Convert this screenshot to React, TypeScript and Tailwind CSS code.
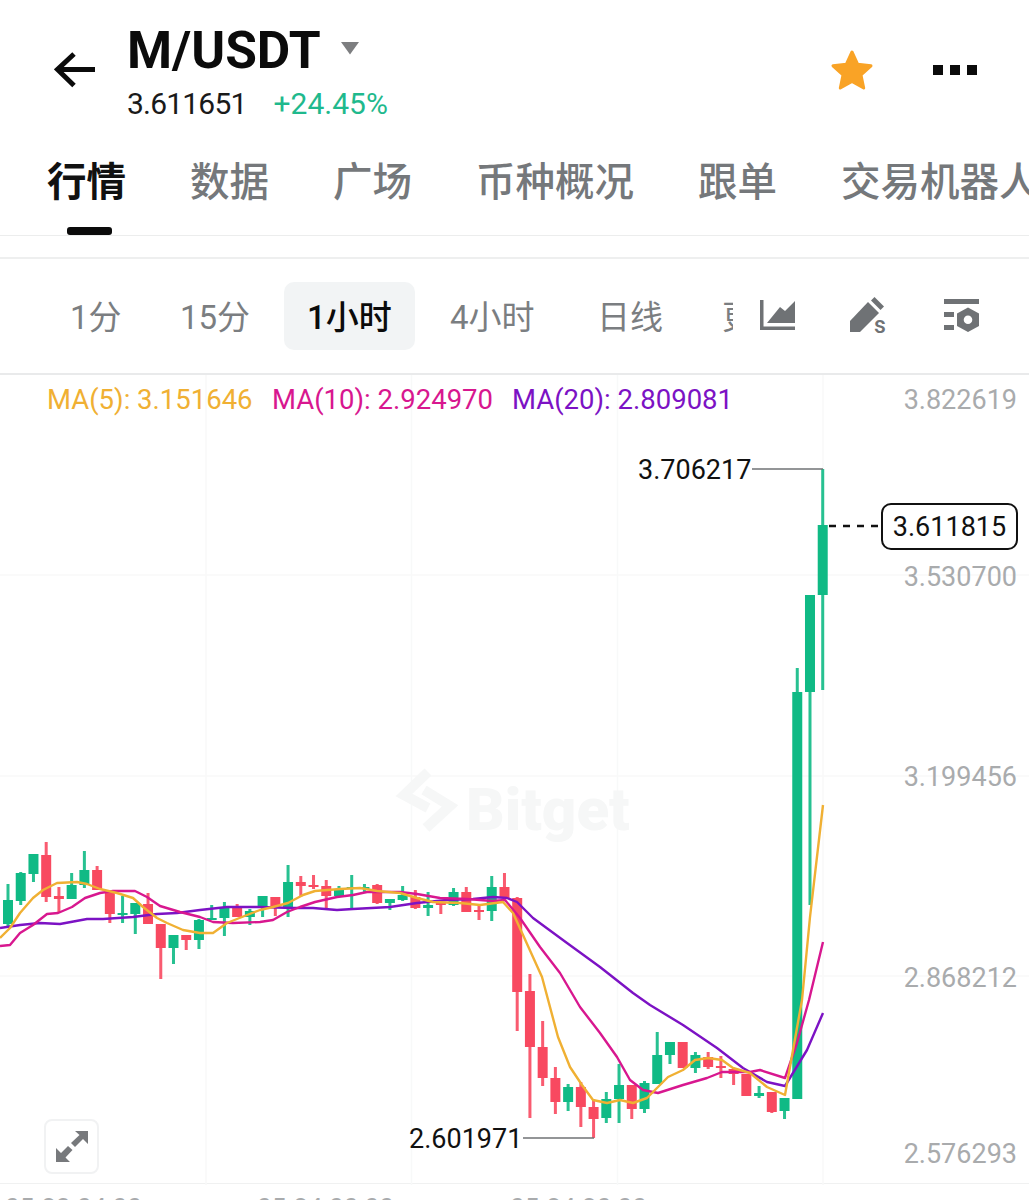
const num = '"Roboto", "Noto Sans CJK SC", sans-serif';

// g = green, r = red; [color, bodyTop, bodyBottom, wickTop, wickBottom], 12.73px apart
const candles: [string, number, number, number, number][] = [
  ['g', 900, 924, 884, 926], ['g', 873, 901, 872, 905], ['g', 854, 874, 854, 882], ['r', 855, 897, 842, 902],
  ['r', 896, 899, 887, 912], ['g', 885, 899, 873, 899], ['g', 870, 885, 851, 888], ['r', 870, 890, 866, 890],
  ['r', 890, 914, 890, 923], ['g', 913, 915, 896, 923], ['g', 903, 914, 903, 934], ['r', 904, 924, 893, 924],
  ['r', 924, 948, 924, 979], ['g', 935, 948, 935, 964], ['r', 935, 940, 935, 950], ['g', 920, 940, 919, 949],
  ['g', 918, 920, 905, 920], ['g', 908, 918, 902, 936], ['r', 907, 917, 904, 917], ['g', 911, 917, 909, 925],
  ['g', 896, 907, 896, 917], ['r', 897, 908, 897, 916], ['g', 882, 907, 865, 917], ['r', 882, 886, 876, 897],
  ['r', 885, 887, 875, 889], ['r', 886, 896, 880, 909], ['g', 890, 896, 886, 896], ['g', 887, 889, 875, 909],
  ['g', 887, 889, 884, 892], ['r', 885, 903, 884, 904], ['g', 899, 903, 899, 910], ['g', 895, 900, 886, 901],
  ['r', 897, 908, 890, 909], ['g', 905, 908, 892, 916], ['r', 903, 905, 903, 914], ['g', 892, 905, 888, 906],
  ['r', 892, 912, 887, 912], ['r', 910, 912, 904, 920], ['g', 887, 911, 876, 921], ['r', 887, 898, 873, 898],
  ['r', 898, 992, 897, 1031], ['r', 991, 1047, 974, 1118], ['r', 1047, 1078, 1021, 1086], ['r', 1078, 1102, 1067, 1114],
  ['g', 1087, 1102, 1084, 1111], ['r', 1087, 1107, 1082, 1127], ['r', 1107, 1119, 1100, 1138], ['g', 1099, 1118, 1092, 1123],
  ['g', 1085, 1099, 1064, 1123], ['r', 1085, 1109, 1085, 1119], ['g', 1083, 1109, 1081, 1113], ['g', 1055, 1084, 1032, 1084],
  ['g', 1042, 1055, 1042, 1064], ['r', 1042, 1068, 1042, 1068], ['g', 1055, 1068, 1052, 1073], ['r', 1057, 1067, 1052, 1069],
  ['r', 1066, 1068, 1056, 1078], ['r', 1069, 1074, 1068, 1085], ['r', 1074, 1096, 1074, 1096], ['g', 1093, 1096, 1086, 1098],
  ['r', 1092, 1112, 1092, 1113], ['g', 1098, 1111, 1098, 1119], ['g', 692, 1099, 668, 1099], ['g', 595, 692, 595, 905],
  ['g', 525, 595, 469, 690],
];

const ma5 =
  '0,938 10,928 20,913 33,898 43,890 57,883 77,882 87,884 100,889 117,893 133,898 143,907 157,918 167,923 183,930 200,933 213,933 227,923 247,915 260,910 273,907 288,903 303,895 315,891 340,889 360,888 377,891 400,893 417,898 433,902 460,903 480,905 503,902 513,913 523,935 542,977 558,1037 570,1067 582,1085 593,1100 607,1103 620,1100 633,1103 647,1098 657,1088 668,1077 683,1070 695,1060 708,1058 722,1060 733,1068 750,1073 767,1087 785,1095 793,1050 802,1000 810,917 823,805';
const ma10 =
  '0,946 10,945 20,933 33,925 47,914 58,913 72,907 85,898 100,893 113,891 135,891 147,897 160,906 180,912 200,917 213,922 233,923 260,922 273,920 287,912 300,907 315,902 337,897 353,895 367,892 400,892 417,894 440,898 467,899 493,901 505,900 520,918 540,947 560,973 580,1007 600,1033 617,1057 630,1080 643,1090 658,1093 683,1085 707,1078 722,1072 750,1072 760,1070 785,1078 797,1043 809,1000 823,942';
const ma20 =
  '0,928 20,925 40,923 60,924 87,919 103,919 133,917 157,914 177,913 200,910 227,907 260,907 293,908 313,908 337,910 353,909 390,907 417,903 447,900 473,899 493,897 507,898 517,902 533,918 567,943 600,967 633,993 650,1005 683,1025 717,1048 743,1068 767,1082 785,1086 807,1050 823,1013';

const tabs = ['数据', '广场', '币种概况', '跟单', '交易机器人'];

function ChartSvg() {
  return (
    <svg className="absolute inset-0" width={1029} height={810} viewBox="0 375 1029 810">
      {[206, 411.5, 617.5, 823].map((x) => (
        <line key={x} x1={x} x2={x} y1={375} y2={1185} stroke="#f8f9f9" strokeWidth={1.5} />
      ))}
      {[575, 776, 976].map((y) => (
        <line key={y} x1={0} x2={1029} y1={y} y2={y} stroke="#f8f9f9" strokeWidth={1.5} />
      ))}

      {/* Bitget watermark */}
      <path d="M428 772 L404 795 L428 808 M424 790 L450 806 L426 828" fill="none" stroke="#f6f7f7" strokeWidth={10} />
      <text x={466} y={830} fontFamily="Roboto, sans-serif" fontWeight={900} fontSize={60} fill="#f6f7f7">
        Bitget
      </text>

      <rect x={-9} y={923} width={9} height={10} fill="#10ba85" />
      {candles.map(([c, top, bottom, wt, wb], i) => {
        const x = 8 + i * 12.73;
        const color = c === 'g' ? '#10ba85' : '#f84960';
        return (
          <g key={i}>
            <rect x={x - 1.5} y={wt} width={3} height={wb - wt} fill={color} opacity={0.9} />
            <rect x={x - 5} y={top} width={10} height={bottom - top} fill={color} />
          </g>
        );
      })}

      <polyline points={ma20} fill="none" stroke="#7c12c4" strokeWidth={2.4} strokeLinejoin="round" />
      <polyline points={ma10} fill="none" stroke="#d8178f" strokeWidth={2.4} strokeLinejoin="round" />
      <polyline points={ma5} fill="none" stroke="#f0b033" strokeWidth={2.4} strokeLinejoin="round" />

      <line x1={752} x2={823} y1={469} y2={469} stroke="#6f7275" strokeWidth={1.5} />
      <line x1={523} x2={594} y1={1138} y2={1138} stroke="#6f7275" strokeWidth={1.5} />
      <line x1={829} x2={878} y1={526} y2={526} stroke="#111" strokeWidth={2.4} strokeDasharray="7 7" />
    </svg>
  );
}

export default function App() {
  return (
    <div className="w-[1029px] h-[1200px] overflow-hidden bg-white flex flex-col" style={{ fontFamily: num }}>
      {/* Header */}
      <div className="h-[140px] shrink-0 flex items-start pl-[54px] pr-[52px]">
        <svg className="mt-[52px] shrink-0" width="41" height="36" viewBox="0 0 41 36" fill="none" stroke="#0b0b0b" strokeWidth="5">
          <path d="M41 17.5H4M20 2L3.5 17.5L20 33.5" />
        </svg>
        <div className="ml-[32px] mt-[22px]">
          <div className="flex items-start">
            <span className="text-[51.5px] leading-[58px] font-bold text-[#0b0b0b]">M/USDT</span>
            <svg className="ml-[20px] mt-[20px]" width="18" height="13" viewBox="0 0 18 13">
              <path d="M0 0H18L9 12.5Z" fill="#7d7e80" />
            </svg>
          </div>
          <div className="flex items-center mt-[7px] text-[30px] leading-[34px]">
            <span className="text-[#1a1a1a] tracking-[-0.8px]">3.611651</span>
            <span className="ml-[27px] text-[#1fb98d]">+24.45%</span>
          </div>
        </div>
        <svg className="ml-auto mt-[49px]" width="44" height="42" viewBox="0 0 44 42">
          <path d="M22 3L27.6 15.2L41 16.8L31 26L33.7 39L22 32.4L10.3 39L13 26L3 16.8L16.4 15.2Z" fill="#f9a326" stroke="#f9a326" strokeWidth="3" strokeLinejoin="round" />
        </svg>
        <div className="ml-[59px] mt-[65px] flex gap-[7px]">
          <div className="w-[10px] h-[10px] bg-[#0b0b0b]" />
          <div className="w-[10px] h-[10px] bg-[#0b0b0b]" />
          <div className="w-[10px] h-[10px] bg-[#0b0b0b]" />
        </div>
      </div>

      {/* Tabs */}
      <div className="h-[96px] shrink-0 border-b border-[#eceded] flex items-start pl-[47px] gap-[64px] whitespace-nowrap overflow-hidden">
        <div className="flex flex-col items-center shrink-0">
          <span className="text-[39.5px] leading-[46px] mt-[20px] font-bold text-[#111]">行情</span>
          <div className="w-[45px] h-[8px] ml-[6px] rounded-[3px] bg-[#0b0b0b] mt-[21px]" />
        </div>
        {tabs.map((t) => (
          <span key={t} className="shrink-0 text-[39.5px] leading-[46px] mt-[20px] font-medium text-[#75787b]">
            {t}
          </span>
        ))}
      </div>

      <div className="h-[23px] shrink-0 border-b-2 border-[#eeefef]" />

      {/* Toolbar */}
      <div className="h-[116px] shrink-0 border-b-2 border-[#e9eaeb] flex items-center pl-[70px] text-[33px] text-[#7b7e81] whitespace-nowrap">
        <span className="w-[110px] pt-[4px] shrink-0">1分</span>
        <span className="w-[104px] pt-[4px] shrink-0">15分</span>
        <span className="w-[131px] h-[68px] pt-[4px] shrink-0 rounded-[10px] bg-[#f2f4f5] flex items-center justify-center font-medium text-[#0b0b0b]">
          1小时
        </span>
        <span className="ml-[35px] w-[147px] pt-[4px] shrink-0">4小时</span>
        <span className="w-[125px] pt-[4px] shrink-0">日线</span>
        <span className="w-[11px] pt-[4px] shrink-0 overflow-hidden">更</span>
        <svg className="ml-[27px] shrink-0" width="36" height="32" viewBox="0 0 36 32" fill="#6f7275">
          <path d="M0 0H3.5V26.5H35V30H0Z" />
          <path d="M7 23L20 7L25 11L35 1V23Z" />
        </svg>
        <svg className="ml-[54px] shrink-0" width="39" height="38" viewBox="0 0 39 38" fill="#6f7275">
          <path d="M0 24L18 5L29 16L10 35H0Z" />
          <path d="M21 3.5L24.5 0L34 9.5L30.5 13Z" />
          <text x="24" y="36" fontSize="23" fontWeight="500" fontFamily="Roboto, sans-serif">s</text>
        </svg>
        <svg className="ml-[55px] shrink-0" width="36" height="35" viewBox="0 0 36 35" fill="#6f7275">
          <path d="M0 0H35V5H0Z" />
          <path d="M0 13H10V18H0ZM0 26H10V31H0Z" />
          <path fillRule="evenodd" d="M24 8.5L35 14.5V27L24 33L13 27V14.5ZM24 16.5A4.3 4.3 0 1 0 24 25.1A4.3 4.3 0 1 0 24 16.5Z" />
        </svg>
      </div>

      {/* Chart */}
      <div className="relative h-[809px] shrink-0 border-b border-[#f0f1f1]">
        <ChartSvg />

        <div className="absolute left-[47px] top-[25px] -translate-y-1/2 flex text-[27.5px] leading-none whitespace-nowrap">
          <span className="w-[225px] text-[#f0b033]">MA(5): 3.151646</span>
          <span className="w-[240px] text-[#d8178f]">MA(10): 2.924970</span>
          <span className="text-[#7c12c4]">MA(20): 2.809081</span>
        </div>

        <span className="absolute right-[12px] top-[25px] -translate-y-1/2 text-[27px] leading-none text-[#a9abad]">3.822619</span>
        <span className="absolute right-[12px] top-[202px] -translate-y-1/2 text-[27px] leading-none text-[#a9abad]">3.530700</span>
        <span className="absolute right-[12px] top-[402px] -translate-y-1/2 text-[27px] leading-none text-[#a9abad]">3.199456</span>
        <span className="absolute right-[12px] top-[603px] -translate-y-1/2 text-[27px] leading-none text-[#a9abad]">2.868212</span>
        <span className="absolute right-[12px] top-[779px] -translate-y-1/2 text-[27px] leading-none text-[#a9abad]">2.576293</span>

        <span className="absolute left-[638px] top-[95px] -translate-y-1/2 text-[27px] leading-none text-[#111]">3.706217</span>
        <span className="absolute left-[409px] top-[764px] -translate-y-1/2 text-[27px] leading-none text-[#111]">2.601971</span>

        <div className="absolute left-[881px] top-[128px] w-[137px] h-[47px] pt-[2px] rounded-[10px] border-2 border-[#111] bg-white flex items-center justify-center text-[27px] text-[#111]">
          3.611815
        </div>

        <div className="absolute left-[44px] top-[744px] w-[55px] h-[55px] rounded-[8px] border-2 border-[#f1f2f3] bg-white flex items-center justify-center">
          <svg width="32" height="31" viewBox="0 0 32 31" fill="#77797c">
            <path d="M19 0H32V13L27 8L19 16L15 12L23.5 4Z" />
            <path d="M0 31V17L5 22L12 15L16.5 19L9.5 26.5L14 31Z" />
          </svg>
        </div>
      </div>

      {/* Time axis */}
      <div className="flex pt-[9px] pl-[5px] text-[26px] leading-[30px] text-[#a9abad] whitespace-nowrap">
        <span className="w-[252px]">05-23 04:00</span>
        <span className="w-[253px]">05-24 00:00</span>
        <span>05-24 20:00</span>
      </div>
    </div>
  );
}
